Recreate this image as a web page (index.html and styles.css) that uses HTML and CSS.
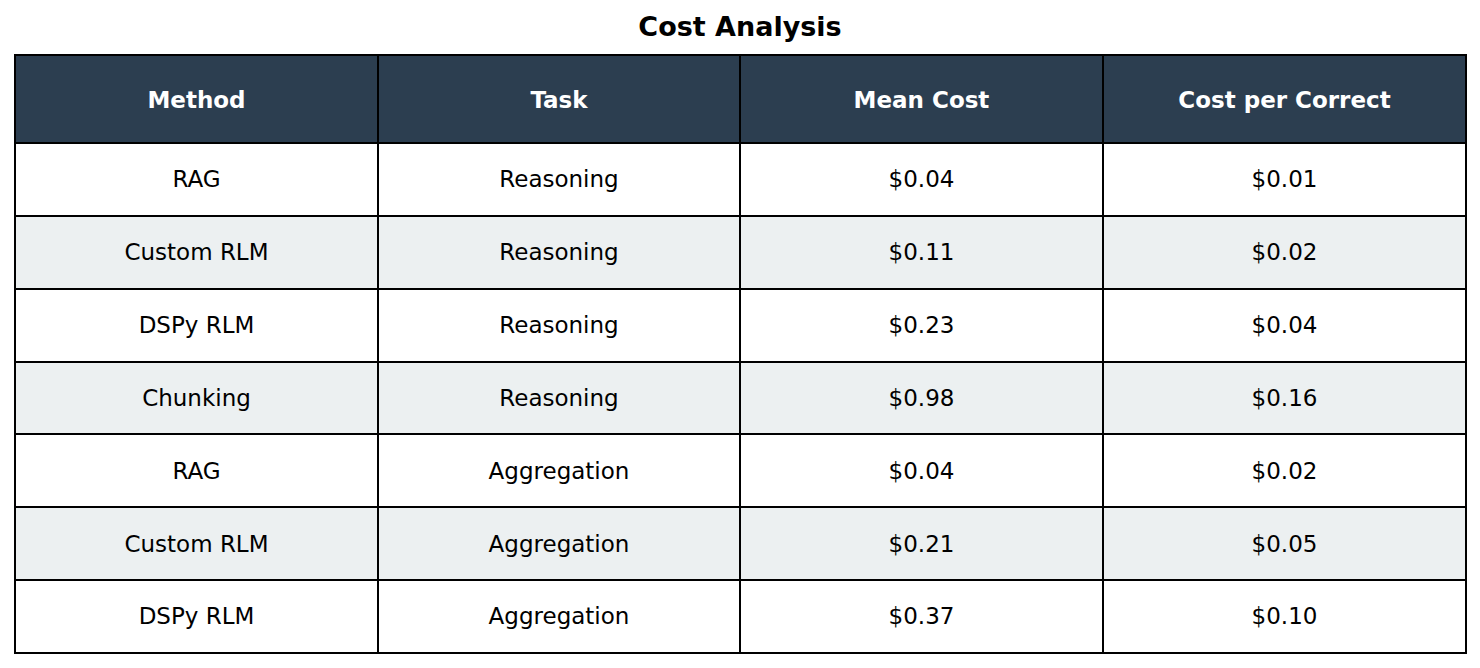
FILE: index.html
```html
<!DOCTYPE html>
<html>
<head>
<meta charset="utf-8">
<link rel="stylesheet" href="styles.css">
</head>
<body>
<div class="page">
  <h1 class="title">Cost Analysis</h1>
  <table class="cost">
    <colgroup>
      <col class="c1"><col class="c2"><col class="c3"><col class="c4">
    </colgroup>
    <thead>
      <tr><th>Method</th><th>Task</th><th>Mean Cost</th><th>Cost per Correct</th></tr>
    </thead>
    <tbody>
      <tr><td>RAG</td><td>Reasoning</td><td>$0.04</td><td>$0.01</td></tr>
      <tr class="alt"><td>Custom RLM</td><td>Reasoning</td><td>$0.11</td><td>$0.02</td></tr>
      <tr><td>DSPy RLM</td><td>Reasoning</td><td>$0.23</td><td>$0.04</td></tr>
      <tr class="alt"><td>Chunking</td><td>Reasoning</td><td>$0.98</td><td>$0.16</td></tr>
      <tr><td>RAG</td><td>Aggregation</td><td>$0.04</td><td>$0.02</td></tr>
      <tr class="alt"><td>Custom RLM</td><td>Aggregation</td><td>$0.21</td><td>$0.05</td></tr>
      <tr><td>DSPy RLM</td><td>Aggregation</td><td>$0.37</td><td>$0.10</td></tr>
    </tbody>
  </table>
</div>
</body>
</html>
```

FILE: styles.css
```css
html, body {
  margin: 0;
  padding: 0;
  background: #ffffff;
}
.page {
  width: 1480px;
  height: 668px;
  font-family: "DejaVu Sans", sans-serif;
  color: #000;
}
.title {
  margin: 0;
  height: 54px;
  line-height: 54px;
  text-align: center;
  font-size: 27px;
  font-weight: bold;
}
.cost {
  margin-left: 14px;
  width: 1453px;
  border-collapse: collapse;
  table-layout: fixed;
}
.c1 { width: 363px; }
.c2 { width: 362px; }
.c3 { width: 363px; }
.c4 { width: 363px; }
.cost th, .cost td {
  border: 2px solid #000;
  text-align: center;
  padding: 0;
}
.cost th {
  height: 84px;
  padding-top: 2px;
  background: #2c3e50;
  color: #fff;
  font-size: 23px;
  font-weight: bold;
}
.cost td {
  height: 70.85px;
  font-size: 23px;
  background: #fff;
}
.cost tr.alt td {
  background: #ecf0f1;
}
```
